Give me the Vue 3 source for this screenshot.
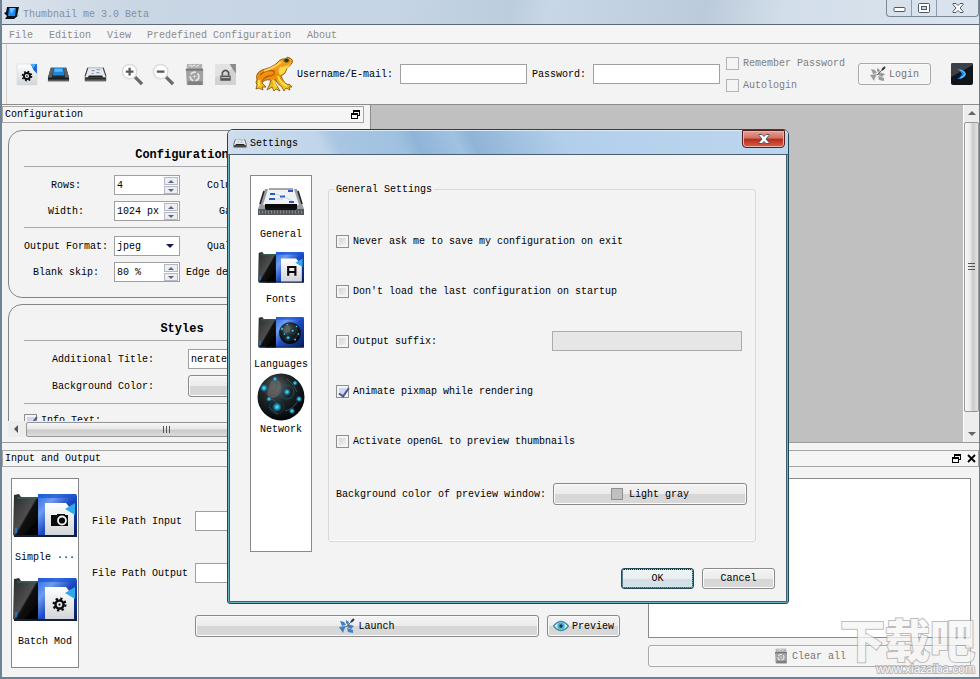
<script setup>
import { ref } from 'vue'

const menus = ['File', 'Edition', 'View', 'Predefined Configuration', 'About']

const toolGroups = [
  [
    { id: 'page-gear', title: 'New configuration' },
    { id: 'tray-blue', title: 'Render' },
  ],
  [{ id: 'tray', title: 'Settings' }],
  [
    { id: 'zoom-in', title: 'Zoom in' },
    { id: 'zoom-out', title: 'Zoom out' },
    { id: 'trash', title: 'Clear' },
    { id: 'page-lock', title: 'Lock' },
  ],
]

const username = ref('')
const password = ref('')

const config = ref({
  rows: '4',
  columns: '4',
  width: '1024 px',
  gap: '4 px',
  format: 'jpeg',
  quality: '80 %',
  blank: '80 %',
  edge: '80 %',
  title: 'nerated by Thumbnail me',
  infoText: true,
})

const modes = [
  { id: 'folder-camera', label: 'Simple ···' },
  { id: 'folder-gear', label: 'Batch Mod' },
]
const inputPath = ref('')
const outputPath = ref('')

// --- SETTINGS DIALOG ---
const sections = [
  { id: 'tray-large', label: 'General' },
  { id: 'folder-font', label: 'Fonts' },
  { id: 'folder-globe', label: 'Languages' },
  { id: 'globe', label: 'Network' },
]
const suffix = ref('')
const options = ref([
  { id: 'ask', label: 'Never ask me to save my configuration on exit', on: false },
  { id: 'load', label: "Don't load the last configuration on startup", on: false },
  { id: 'suffix', label: 'Output suffix:', on: false },
  { id: 'animate', label: 'Animate pixmap while rendering', on: true },
  { id: 'opengl', label: 'Activate openGL to preview thumbnails', on: false },
])
</script>

<template>
  <div class="window">
    <!-- Shared icons -->
    <svg class="defs" aria-hidden="true">
      <defs>
        <linearGradient id="gBlue" x1="0" y1="0" x2="1" y2="1">
          <stop offset="0" stop-color="#2f6ae0" />
          <stop offset="0.25" stop-color="#6f9cf0" />
          <stop offset="0.5" stop-color="#1c4bc4" />
          <stop offset="1" stop-color="#061a55" />
        </linearGradient>
        <linearGradient id="gDark" x1="0" y1="0" x2="1" y2="1">
          <stop offset="0" stop-color="#262a2c" />
          <stop offset="0.5" stop-color="#4e4e4e" />
          <stop offset="0.55" stop-color="#101010" />
          <stop offset="1" stop-color="#000" />
        </linearGradient>
        <linearGradient id="gPage" x1="0" y1="0" x2="0" y2="1">
          <stop offset="0" stop-color="#fff" />
          <stop offset="1" stop-color="#d2d5d8" />
        </linearGradient>
        <linearGradient id="gBar" x1="0" y1="0" x2="0" y2="1">
          <stop offset="0" stop-color="#111" />
          <stop offset="1" stop-color="#777" />
        </linearGradient>
        <linearGradient id="gFrog" x1="0" y1="0" x2="0" y2="1">
          <stop offset="0" stop-color="#f6a81c" />
          <stop offset="0.6" stop-color="#f08c0c" />
          <stop offset="1" stop-color="#f4d832" />
        </linearGradient>
        <radialGradient id="gGlobe" cx="0.4" cy="0.3" r="0.7">
          <stop offset="0" stop-color="#5c6468" />
          <stop offset="0.45" stop-color="#202628" />
          <stop offset="1" stop-color="#020608" />
        </radialGradient>
        <radialGradient id="gGlow">
          <stop offset="0" stop-color="#5fe8ff" />
          <stop offset="0.4" stop-color="#1ea4c8" />
          <stop offset="1" stop-color="#0a4a60" stop-opacity="0" />
        </radialGradient>
      </defs>

      <symbol id="gear" viewBox="0 0 16 16">
        <circle cx="8" cy="8" r="4.3" fill="none" stroke="#0a0a0a" stroke-width="2.6" />
        <circle cx="8" cy="8" r="6.3" fill="none" stroke="#0a0a0a" stroke-width="2.4" stroke-dasharray="2.4 2.55" />
        <circle cx="8" cy="8" r="1.2" fill="#0a0a0a" />
      </symbol>

      <symbol id="logo" viewBox="0 0 16 14">
        <path d="M3 1h12l-2 9 2-1-5 4H1l2-3-3-3 2-1z" fill="#0b1220" />
        <path d="M5 2h7l-1 8H4z" fill="#1f8bf0" />
        <path d="M6 2h5l-4 6z" fill="#7cc6ff" />
      </symbol>

      <symbol id="page-gear" viewBox="0 0 22 22">
        <path d="M1 1h19v20H1z" fill="url(#gPage)" stroke="#d8dadc" stroke-width="0.6" />
        <path d="M14 1h6v9l-3-3z" fill="#1c66d8" />
        <path d="M14 1h5l-2 4z" fill="#4cb4f4" />
        <use href="#gear" x="5" y="7" width="11" height="11" />
      </symbol>

      <symbol id="tray-blue" viewBox="0 0 24 22">
        <path d="M4 4h16l3 10v4H1v-4z" fill="#22272c" />
        <path d="M4 4l-3 10h4l2-10zM20 4l3 10h-4L17 4z" fill="#59626a" />
        <path d="M7 4h10l1 8H6z" fill="#1a86dc" />
        <path d="M8 5h8l.4 3H7.6z" fill="#5cb8f4" />
        <path d="M1 15h22v3H1z" fill="url(#gBar)" />
      </symbol>

      <symbol id="tray" viewBox="0 0 24 22">
        <path d="M4 4h16l3 10v4H1v-4z" fill="#e6e9ec" stroke="#999" stroke-width="0.7" />
        <path d="M4 4l-3 9M20 4l3 9" stroke="#444" stroke-width="1.1" />
        <path d="M8 7h3M13 6h4M8 10h2M13 9h3" stroke="#8693b4" stroke-width="1.2" />
        <path d="M5 12h14l1 2H4z" fill="#222" />
        <path d="M1 14h22v4H1z" fill="url(#gBar)" />
      </symbol>

      <symbol id="tray-large" viewBox="0 0 46 28">
        <path d="M7 1h32l7 20v6H0v-6z" fill="#9a9da0" />
        <path d="M10 1h26l5 16H5z" fill="#eef1f5" />
        <path d="M6 3L2 16M40 3l4 13" stroke="#222" stroke-width="1.6" />
        <path d="M11 1h24" stroke="#555" />
        <path d="M12 6h5M30 3h5M11 11h6M22 8.500h5M31 14h5" stroke="#2c58c0" stroke-width="2" />
        <path d="M17 6l8 2M27 9l7 4M17 11h8" stroke="#b5bfd0" stroke-width="0.6" />
        <path d="M7 16h32v6H7z" fill="#0a0a0a" />
        <path d="M0 21h46v6H0z" fill="#55585b" />
        <path d="M1 24h44" stroke="#888" stroke-width="3" stroke-dasharray="1 2" />
        <path d="M8 20h30v2H8z" fill="#111" />
      </symbol>

      <symbol id="zoom-in" viewBox="0 0 24 24">
        <path d="M14 14l8 8" stroke="#6a6a6a" stroke-width="3.500" />
        <circle cx="9" cy="9" r="7.500" fill="#fdfdfd" stroke="#dcdcdc" stroke-width="1.500" />
        <path d="M9 5v8M5 9h8" stroke="#5a5a5a" stroke-width="2.400" />
      </symbol>

      <symbol id="zoom-out" viewBox="0 0 24 24">
        <path d="M14 14l8 8" stroke="#6a6a6a" stroke-width="3.500" />
        <circle cx="9" cy="9" r="7.500" fill="#fdfdfd" stroke="#dcdcdc" stroke-width="1.500" />
        <path d="M5 9h8" stroke="#5a5a5a" stroke-width="2.400" />
      </symbol>

      <symbol id="trash" viewBox="0 0 22 24">
        <path d="M3 1h16v6H3z" fill="#b2b2b2" />
        <path d="M5 3l2-1 1 2 3-2 2 2 3-2" stroke="#eee" fill="none" />
        <path d="M2 6h18v17H3z" fill="#a2a2a2" />
        <path d="M2 6h18v2H2z" fill="#777" />
        <path d="M4 19h15v4H4z" fill="#808080" />
        <circle cx="11" cy="14" r="4.500" fill="none" stroke="#e6e6e6" stroke-width="1.800" stroke-dasharray="6 2" />
        <path d="M9 14h4M11 12v4" stroke="#d5d5d5" />
      </symbol>

      <symbol id="page-lock" viewBox="0 0 22 22">
        <path d="M1 1h20v20H1z" fill="#e2e2e2" />
        <path d="M1 14L21 4v17H1z" fill="#d2d2d2" />
        <path d="M15 1h6v9l-3-4z" fill="#8c8c8c" />
        <path d="M8 12V9q3-4 6 0v3" fill="none" stroke="#555" stroke-width="1.600" />
        <path d="M6 12h10v5H6z" fill="#555" />
        <path d="M7 14h8" stroke="#ccc" />
      </symbol>

      <symbol id="frog" viewBox="0 0 40 36">
        <path d="M3 24Q1 17 8 14Q17 12 22 8Q27 2 31 3Q33 0 36 2Q40 4 38 7Q36 10 33 12Q32 18 27 20Q29 25 32 28Q37 28 38 31L35 31L36 34L32 32L30 35L28 31Q23 28 21 23Q20 27 23 30L26 35L22 33L20 35L18 31L13 34L15 30L17 24Q10 23 8 27L12 31L8 31L9 34L5 32L2 33L3 29Q1 26 3 24z" fill="url(#gFrog)" stroke="#92550a" stroke-width="0.9" />
        <path d="M6 19Q12 13 20 15Q22 19 15 20Q10 21 8 26" fill="none" stroke="#b85f05" stroke-width="1.300" />
        <path d="M10 15Q20 12 27 6" stroke="#ffd35c" stroke-width="1.800" fill="none" />
        <path d="M26 11Q33 11 37 7Q34 12 32 13Q31 18 26 19Q23 15 26 11z" fill="#f6dc4a" />
        <path d="M24 20Q26 27 33 30M19 24L22 31M5 24v6" stroke="#f8ea48" stroke-width="1.900" fill="none" />
        <ellipse cx="32.500" cy="4.500" rx="2.600" ry="1.900" fill="#2d3016" stroke="#7a7a1c" />
      </symbol>

      <symbol id="arrow-box" viewBox="0 0 22 22">
        <rect width="22" height="22" rx="2" fill="#111418" />
        <path d="M0 2q0-2 2-2h18q2 0 2 2L0 14z" fill="#3c4148" />
        <path d="M6 6q8 0 9 5q-1 5-9 5q4-2 5-5q-1-3-5-5z" fill="#1785ee" />
        <path d="M9 7q4 1 5 4q-1 3-5 4" fill="none" stroke="#63c0ff" stroke-width="1.200" />
      </symbol>

      <symbol id="launch" viewBox="0 0 16 16">
        <path d="M1 3l4 1 2 3-4 1zM0 9l7-1-2 4-1 3-2-3zM9 6l6 2-3 3-4-2zM8 10l6 2v3l-5-1zM7 2l3 2-1 3-2-2z" fill="currentColor" />
        <path d="M7 9l6-6" stroke="#667" stroke-width="1" />
        <path d="M12 4l3-3" stroke="#333" stroke-width="2" />
      </symbol>

      <symbol id="eye" viewBox="0 0 16 12">
        <path d="M0.500 6Q8-3 15.500 6Q8 15 0.500 6z" fill="#dff2f8" stroke="#3f8ca4" stroke-width="1.400" />
        <circle cx="8" cy="6" r="3.800" fill="#4db2d2" />
        <circle cx="8" cy="6" r="1.700" fill="#103848" />
      </symbol>

      <symbol id="folder" viewBox="0 0 64 44">
        <path d="M1 2l5-1 2 3h17v40H3l-3-2z" fill="url(#gDark)" />
        <path d="M4 5h21" stroke="#37695f" stroke-width="1.200" />
        <path d="M10 44l15-17v17z" fill="#000" />
        <path d="M25 1h38l1 2v41H25z" fill="url(#gBlue)" />
        <path d="M25 1h38v4H25z" fill="#1a56d4" opacity="0.7" />
        <path d="M3 35v5" stroke="#2b7ad8" stroke-width="1.600" />
        <path d="M1 42h62v2H1z" fill="#14203a" />
      </symbol>

      <symbol id="folder-page" viewBox="0 0 64 44">
        <use href="#folder" width="64" height="44" />
        <path d="M32 10h21l8 10v22H32z" fill="url(#gPage)" />
        <path d="M52 16l10-6v12z" fill="#2fa8ee" />
      </symbol>

      <symbol id="folder-camera" viewBox="0 0 64 44">
        <use href="#folder-page" width="64" height="44" />
        <path d="M38 22h6v-1h8v1h3v11H38z" fill="#0a0a0a" />
        <circle cx="49" cy="27.500" r="4" fill="#0a0a0a" stroke="#f4f4f4" stroke-width="1.800" />
      </symbol>

      <symbol id="folder-gear" viewBox="0 0 64 44">
        <use href="#folder-page" width="64" height="44" />
        <use href="#gear" x="39" y="20" width="15" height="15" />
      </symbol>

      <symbol id="folder-font" viewBox="0 0 64 44">
        <use href="#folder-page" width="64" height="44" />
        <path d="M42 34V22h10v12M42 29h10" fill="none" stroke="#0a0a0a" stroke-width="3" />
      </symbol>

      <symbol id="globe" viewBox="0 0 48 48">
        <circle cx="24" cy="24" r="23.500" fill="url(#gGlobe)" />
        <path d="M14 8q8-4 10 4t-5 12-9-4z" fill="#6e6a68" opacity="0.6" />
        <path d="M17 5q6 8-1 14M9 27q8-3 12 5M30 6q8 6 10 13M28 38q8-2 12-9M12 34q5 5 9 7" fill="none" stroke="#4b585c" stroke-width="0.8" />
        <circle cx="30" cy="19" r="7" fill="none" stroke="#1c6478" stroke-width="0.7" />
        <circle cx="20" cy="34" r="7" fill="none" stroke="#14485a" stroke-width="0.7" />
        <circle cx="7" cy="15" r="4.500" fill="url(#gGlow)" />
        <circle cx="20" cy="34" r="5.500" fill="url(#gGlow)" />
        <circle cx="30" cy="19" r="4" fill="url(#gGlow)" />
        <circle cx="38" cy="10" r="3" fill="url(#gGlow)" />
        <circle cx="42" cy="26" r="3.500" fill="url(#gGlow)" />
        <circle cx="35" cy="38" r="3.500" fill="url(#gGlow)" />
        <circle cx="12" cy="26" r="3" fill="url(#gGlow)" />
        <circle cx="18" cy="6" r="3" fill="url(#gGlow)" />
      </symbol>

      <symbol id="folder-globe" viewBox="0 0 64 44">
        <use href="#folder" width="64" height="44" />
        <use href="#globe" x="29" y="8" width="31" height="31" />
      </symbol>

      <symbol id="float" viewBox="0 0 9 9">
        <path d="M2.500 0v3M8.500 0v6M2 .5h7M6 5.500h3M2 1.500h7M.5 3v6M6.500 3v6M0 3.500h7M0 4.500h7M0 8.500h7" stroke="#000" fill="none" />
      </symbol>
      <symbol id="cross" viewBox="0 0 9 9">
        <path d="M1 1l7 7M8 1l-7 7" stroke="#000" stroke-width="1.800" />
      </symbol>
      <symbol id="close" viewBox="0 0 12 10">
        <path d="M1 .5h3l2 2 2-2h3v1L8 5l3 3.500v1H8l-2-2-2 2H1v-1L4 5 1 1.500z" fill="#fff" stroke="#4d5966" />
      </symbol>
    </svg>

    <header class="titlebar">
      <svg class="logo"><use href="#logo" /></svg>
      <span class="caption">Thumbnail me 3.0 Beta</span>
      <div class="window-buttons">
        <button type="button" aria-label="Minimize">
          <svg width="13" height="10"><rect x="1" y="4.500" width="11" height="4" rx="1" fill="#fff" stroke="#4d5966" /></svg>
        </button>
        <button type="button" aria-label="Maximize">
          <svg width="12" height="10">
            <rect x=".5" y=".5" width="11" height="9" rx="1" fill="#fff" stroke="#4d5966" />
            <rect x="3.500" y="3.500" width="5" height="3" fill="#c8d4e0" stroke="#4d5966" />
          </svg>
        </button>
        <button type="button" class="wide" aria-label="Close">
          <svg width="12" height="10"><use href="#close" /></svg>
        </button>
      </div>
    </header>

    <nav class="menubar">
      <a v-for="menu in menus" :key="menu" href="#">{{ menu }}</a>
    </nav>

    <div class="toolbar">
      <div v-for="(group, i) in toolGroups" :key="i" class="tools">
        <button v-for="tool in group" :key="tool.id" type="button" class="tool" :aria-label="tool.title">
          <svg><use :href="'#' + tool.id" /></svg>
        </button>
      </div>
      <svg class="frog"><use href="#frog" /></svg>
      <label for="username">Username/E-mail:</label>
      <input id="username" v-model="username" type="text" class="field login-field" />
      <label for="password">Password:</label>
      <input id="password" v-model="password" type="password" class="field login-field" />
      <div class="remember">
        <label class="check"><input type="checkbox" disabled />Remember Password</label>
        <label class="check"><input type="checkbox" disabled />Autologin</label>
      </div>
      <button type="button" class="btn login" disabled>
        <svg class="icon"><use href="#launch" /></svg>Login
      </button>
      <button type="button" class="go" aria-label="Go">
        <svg><use href="#arrow-box" /></svg>
      </button>
    </div>

    <div class="workspace">
      <aside class="dock">
        <div class="dock-title">
          <span>Configuration</span>
          <button type="button" aria-label="Float configuration"><svg><use href="#float" /></svg></button>
        </div>
        <div class="dock-scroll">
          <section class="box">
            <h2>Configuration</h2>
            <div class="grid">
              <label for="rows">Rows:</label>
              <span class="spin"><input id="rows" v-model="config.rows" type="text" /><button type="button" aria-label="More rows"></button><button type="button" aria-label="Fewer rows"></button></span>
              <label for="columns">Columns:</label>
              <span class="spin"><input id="columns" v-model="config.columns" type="text" /><button type="button" aria-label="More columns"></button><button type="button" aria-label="Fewer columns"></button></span>
              <label for="width">Width:</label>
              <span class="spin"><input id="width" v-model="config.width" type="text" /><button type="button" aria-label="Wider"></button><button type="button" aria-label="Narrower"></button></span>
              <label for="gap">Gap:</label>
              <span class="spin"><input id="gap" v-model="config.gap" type="text" /><button type="button" aria-label="More gap"></button><button type="button" aria-label="Less gap"></button></span>
            </div>
            <div class="grid">
              <label for="format">Output Format:</label>
              <span class="drop"><select id="format" v-model="config.format"><option>jpeg</option><option>png</option></select></span>
              <label for="quality">Quality:</label>
              <span class="spin"><input id="quality" v-model="config.quality" type="text" /><button type="button" aria-label="More quality"></button><button type="button" aria-label="Less quality"></button></span>
              <label for="blank">Blank skip:</label>
              <span class="spin"><input id="blank" v-model="config.blank" type="text" /><button type="button" aria-label="More skip"></button><button type="button" aria-label="Less skip"></button></span>
              <label for="edge">Edge detection:</label>
              <span class="spin"><input id="edge" v-model="config.edge" type="text" /><button type="button" aria-label="More edge"></button><button type="button" aria-label="Less edge"></button></span>
            </div>
          </section>

          <section class="box">
            <h2>Styles</h2>
            <div class="grid styles-grid">
              <label for="title">Additional Title:</label>
              <input id="title" v-model="config.title" type="text" class="field" />
              <label for="bgcolor">Background Color:</label>
              <button id="bgcolor" type="button" class="btn"></button>
            </div>
            <div class="grid info-grid">
              <label class="check"><input v-model="config.infoText" type="checkbox" />Info Text:</label>
            </div>
          </section>
        </div>
        <div class="hscroll">
          <i class="arrow left"></i>
          <div class="thumb"><i></i><i></i><i></i></div>
          <i class="arrow right"></i>
        </div>
      </aside>
      <main class="canvas"></main>
      <div class="vscroll">
        <i class="arrow up"></i>
        <div class="thumb"><i></i><i></i><i></i></div>
        <i class="arrow down"></i>
      </div>
    </div>

    <div class="dock-title io-title">
      <span>Input and Output</span>
      <button type="button" aria-label="Float input and output"><svg><use href="#float" /></svg></button>
      <button type="button" aria-label="Close input and output"><svg><use href="#cross" /></svg></button>
    </div>

    <div class="io">
      <ul class="modes">
        <li v-for="mode in modes" :key="mode.id">
          <svg><use :href="'#' + mode.id" /></svg>
          <span>{{ mode.label }}</span>
        </li>
      </ul>
      <div class="paths">
        <label for="in-path">File Path Input</label>
        <input id="in-path" v-model="inputPath" type="text" class="field" />
        <label for="out-path">File Path Output</label>
        <input id="out-path" v-model="outputPath" type="text" class="field" />
        <div class="run">
          <button type="button" class="btn launch"><svg class="icon"><use href="#launch" /></svg>Launch</button>
          <button type="button" class="btn preview"><svg class="icon"><use href="#eye" /></svg>Preview</button>
        </div>
      </div>
      <div class="jobs">
        <div class="job-list"></div>
        <button type="button" class="btn" disabled><svg class="icon"><use href="#trash" /></svg>Clear all</button>
      </div>
    </div>

    <div class="dialog" role="dialog" aria-labelledby="dialog-title">
      <div class="dialog-title">
        <svg><use href="#tray" /></svg>
        <span id="dialog-title">Settings</span>
        <button type="button" aria-label="Close settings"><svg><use href="#close" /></svg></button>
      </div>
      <div class="dialog-body">
        <ul class="sections">
          <li v-for="section in sections" :key="section.id">
            <svg :class="section.id"><use :href="'#' + section.id" /></svg>
            <span>{{ section.label }}</span>
          </li>
        </ul>
        <fieldset class="settings">
          <legend>General Settings</legend>
          <div v-for="option in options" :key="option.id" class="option">
            <label class="check"><input v-model="option.on" type="checkbox" />{{ option.label }}</label>
            <input
              v-if="option.id === 'suffix'"
              v-model="suffix"
              type="text"
              class="field suffix"
              aria-label="Output suffix"
              :disabled="!option.on"
            />
          </div>
          <div class="option color-option">
            <label for="preview-color">Background color of preview window:</label>
            <button id="preview-color" type="button" class="btn"><i class="swatch"></i>Light gray</button>
          </div>
        </fieldset>
      </div>
      <div class="dialog-footer">
        <button type="button" class="btn default">OK</button>
        <button type="button" class="btn">Cancel</button>
      </div>
    </div>

    <div class="watermark">
      <strong>下载吧</strong>
      <span>www.xiazaiba.com</span>
    </div>
  </div>
</template>

<style>
body {
  margin: 0;
  background: #f3f3f3;
}
</style>

<style scoped>
.window,
.window * {
  box-sizing: border-box;
}

.window {
  position: relative;
  display: flex;
  flex-direction: column;
  height: 100vh;
  min-height: 640px;
  overflow: hidden;
  background: #f3f3f3;
  border-left: 2px solid #6c8494;
  border-right: 1px solid #6c7f8e;
  border-bottom: 2px solid #6b8296;
  color: #000;
  font: 10px/13px 'Liberation Mono', 'Noto Sans CJK SC', monospace;
}

button,
input,
select {
  margin: 0;
  padding: 0;
  color: inherit;
  font: inherit;
}

button {
  border: 0;
  background: none;
}

svg {
  display: block;
  flex: none;
}

.defs {
  position: absolute;
  width: 0;
  height: 0;
}

/* --- TITLE BAR --- */
.titlebar {
  display: flex;
  align-items: flex-start;
  gap: 3px;
  height: 25px;
  margin-left: -2px;
  padding-left: 4px;
  border-bottom: 1px solid #5f6973;
  background: linear-gradient(100deg, #dbe2eb 0, #c9d6e4 14%, #c5d5e6 40%, #bccddd 52%, #c8d7e7 56%, #bccbdb 72%, #d2deea 80%, #dbe4ee 100%);
}

.logo {
  width: 16px;
  height: 14px;
  margin-top: 6px;
}

.caption {
  flex: 1;
  margin-top: 8px;
  color: #87909a;
}

.window-buttons {
  display: flex;
  height: 17px;
  border: 1px solid #7a8794;
  border-top: 0;
  border-radius: 0 0 4px 4px;
}

.window-buttons button {
  display: flex;
  align-items: center;
  justify-content: center;
  width: 25px;
  border-right: 1px solid #8f9ca9;
}

.window-buttons .wide {
  width: 41px;
  border-right: 0;
}

/* --- MENU AND TOOLBAR --- */
.menubar {
  display: flex;
  gap: 16px;
  height: 19px;
  padding: 4px 7px 0;
  border-bottom: 1px solid #a4a4a4;
  background: #f5f5f5;
}

.menubar a {
  color: #8b8b8b;
  text-decoration: none;
}

.toolbar {
  display: flex;
  align-items: center;
  height: 60px;
  margin-left: 4px;
  padding: 0 6px 0 5px;
  border-left: 1px solid #d0d0d0;
}

.tools {
  display: flex;
  margin-right: 6px;
}

.tool {
  display: flex;
  align-items: center;
  justify-content: center;
  width: 31px;
  height: 30px;
}

.tool svg {
  width: 23px;
  height: 23px;
}

.frog {
  width: 40px;
  height: 36px;
  margin: 0 3px 0 7px;
}

.field {
  width: 100%;
  height: 20px;
  padding: 0 2px;
  border: 1px solid #a0a0a0;
  border-radius: 0;
  background: #fff;
  outline: 0;
}

.login-field {
  flex: 1;
  min-width: 0;
  margin: 0 5px 0 7px;
}

.remember {
  display: flex;
  flex-direction: column;
  gap: 9px;
  margin: 0 13px 0 1px;
  color: #808080;
}

.check {
  display: flex;
  align-items: center;
  gap: 4px;
  white-space: nowrap;
}

.check input {
  position: relative;
  flex: none;
  width: 13px;
  height: 13px;
  border: 1px solid #8e8f8f;
  background: linear-gradient(135deg, #cfcfcf, #f8f8f8);
  box-shadow: inset 0 0 0 2px #f4f4f4;
  appearance: none;
}

.check input:disabled {
  border-color: #b4b4b4;
  background: #f4f4f4;
}

.check input:checked {
  background: #cfd8ee;
}

.check input:checked::after {
  content: '';
  position: absolute;
  top: 0;
  left: 4px;
  width: 4px;
  height: 9px;
  border: solid #4a5a94;
  border-width: 0 2px 2px 0;
  transform: rotate(35deg);
}

.btn {
  display: flex;
  align-items: center;
  justify-content: center;
  gap: 3px;
  height: 22px;
  border: 1px solid #8a8a8a;
  border-radius: 3px;
  background: linear-gradient(#f4f4f4, #ebebeb 50%, #d6d6d6 52%, #d9d9d9);
  box-shadow: inset 0 0 0 1px #fafafa;
}

.btn:disabled {
  border-color: #a8a8a8;
  background: #f4f4f4;
  color: #757575;
}

.icon {
  width: 16px;
  height: 16px;
}

.login {
  width: 73px;
}

.login .icon {
  color: #9b9b9b;
}

.go {
  margin-left: 20px;
}

.go svg {
  width: 22px;
  height: 22px;
}

/* --- WORKSPACE --- */
.workspace {
  display: flex;
  flex: 1;
  min-height: 0;
  border-top: 1px solid #8c8c8c;
  border-bottom: 1px solid #9a9a9a;
}

.dock {
  display: flex;
  flex-direction: column;
  width: 369px;
  padding: 1px 6px 5px 0;
  border-right: 1px solid #8c8c8c;
}

.dock-title {
  display: flex;
  align-items: center;
  flex: none;
  gap: 6px;
  height: 17px;
  padding: 0 3px 0 2px;
  border: 1px solid #a6a6a6;
  background: #f5f5f5;
}

.dock-title span {
  flex: 1;
}

.dock-title svg {
  width: 9px;
  height: 9px;
}

.dock-scroll {
  flex: 1;
  min-height: 0;
  margin-left: 6px;
  padding-top: 7px;
  overflow: hidden;
}

.box {
  width: 348px;
  margin-bottom: 6px;
  padding: 18px 15px 15px;
  border: 1px solid #858585;
  border-radius: 14px;
}

.box h2 {
  margin: 0 0 5px;
  font-size: 12px;
  font-weight: bold;
  line-height: 12px;
  text-align: center;
}

.grid {
  display: grid;
  grid-template-columns: 84px 66px 90px 1fr;
  align-items: center;
  gap: 6px;
  padding: 8px 0 6px;
  border-top: 1px solid #a8a8a8;
  text-align: center;
}

.grid + .grid {
  padding-bottom: 0;
}

.styles-grid {
  grid-template-columns: 158px 1fr;
}

.info-grid {
  grid-template-columns: 1fr;
  padding-top: 10px;
}

.spin,
.drop {
  display: grid;
  grid-template: 8px 8px / 1fr 14px;
  gap: 1px;
  height: 20px;
  padding: 1px 1px 0 2px;
  border: 1px solid #a0a0a0;
  background: #fff;
}

.spin input {
  grid-row: span 2;
  width: 100%;
  min-width: 0;
  border: 0;
  background: none;
  outline: 0;
}

.spin button {
  display: flex;
  align-items: center;
  justify-content: center;
  border: 1px solid #b4b8c2;
  background: #eceef3;
}

.spin button::after {
  content: '';
  border: solid transparent;
  border-width: 0 3px 3px;
  border-bottom-color: #5c6480;
}

.spin button:last-child::after {
  border-width: 3px 3px 0;
  border-top-color: #5c6480;
}

.drop {
  position: relative;
  display: block;
}

.drop select {
  width: 100%;
  height: 16px;
  border: 0;
  background: none;
  appearance: none;
}

.drop::after {
  content: '';
  position: absolute;
  top: 7px;
  right: 5px;
  border: solid transparent;
  border-width: 4px 4px 0;
  border-top-color: #15195c;
}

/* Scroll bars */
.hscroll,
.vscroll {
  display: flex;
  align-items: center;
  background: #ededed;
}

.hscroll {
  height: 16px;
  margin-left: 6px;
}

.vscroll {
  flex-direction: column;
  width: 16px;
  border-left: 1px solid #fff;
}

.thumb {
  display: flex;
  align-items: center;
  justify-content: center;
  gap: 1px;
  border: 1px solid #969696;
  border-radius: 2px;
}

.thumb i {
  width: 2px;
  height: 7px;
  border-left: 1px solid #555;
}

.hscroll .thumb {
  flex: none;
  width: 282px;
  height: 15px;
  margin-right: auto;
  background: linear-gradient(#f6f6f6, #e8e8e8 45%, #cacaca 55%, #dcdcdc);
}

.vscroll .thumb {
  flex: 1;
  flex-direction: column;
  width: 15px;
  background: linear-gradient(90deg, #f8f8f8, #ebebeb 40%, #c8cacd 60%, #e4e4e4);
}

.vscroll .thumb i {
  width: 7px;
  height: 2px;
  border-top: 1px solid #555;
  border-left: 0;
}

.arrow {
  border: 4px solid transparent;
}

.arrow.left {
  margin: 0 8px 0 2px;
  border-right-color: #555;
}

.arrow.right {
  border-left-color: #555;
}

.arrow.up {
  margin: 2px 0 7px;
  border-bottom-color: #666;
}

.arrow.down {
  margin: 20px 0 2px;
  border-top-color: #666;
}

.canvas {
  flex: 1;
  background: #c0c0c0;
}

/* --- INPUT AND OUTPUT --- */
.io-title {
  margin-top: 7px;
  padding-right: 2px;
}

.io {
  display: flex;
  flex: none;
  padding: 11px 8px 9px 9px;
}

ul {
  margin: 0;
  padding: 0;
  list-style: none;
}

.modes {
  flex: none;
  width: 68px;
  padding: 14px 1px 6px;
  border: 1px solid #868686;
  background: #fff;
}

.modes li {
  display: flex;
  flex-direction: column;
  align-items: center;
  gap: 14px;
  padding-bottom: 13px;
}

.modes svg {
  width: 64px;
  height: 44px;
}

.paths {
  display: grid;
  flex: 528;
  grid-template-columns: 96px 1fr;
  align-content: start;
  align-items: center;
  gap: 32px 7px;
  margin: 33px 28px 0 13px;
}

.run {
  display: flex;
  grid-column: 2;
  gap: 8px;
}

.launch {
  flex: 1;
}

.launch .icon {
  color: #3f7fc4;
}

.preview {
  width: 73px;
}

.jobs {
  display: flex;
  flex: 323;
  flex-direction: column;
  gap: 7px;
}

.job-list {
  height: 160px;
  border: 1px solid #8a8a8a;
  background: #fff;
}

/* --- SETTINGS DIALOG --- */
.dialog {
  position: absolute;
  top: 129px;
  left: 225px;
  width: 562px;
  border: 1px solid #1c4654;
  border-radius: 6px 6px 3px 3px;
  background: #f3f3f3;
  box-shadow: inset 0 0 0 1px #6ab3c0, inset 0 0 0 2px #41606c;
}

.dialog-title {
  display: flex;
  align-items: center;
  gap: 3px;
  height: 25px;
  padding: 2px 3px 0 5px;
  border-bottom: 1px solid #4a5f70;
  border-radius: 5px 5px 0 0;
  background: linear-gradient(65deg, #cfdeee 0, #c0d5ea 17%, #a9c6e2 20%, #9fc1e0 31%, #8fb4d7 34%, #a0c2e1 41%, #90b4d6 44%, #b2cfea 60%, #bdd6ee 100%);
  box-shadow: inset 0 1px 0 #dcebf8;
}

.dialog-title svg {
  width: 14px;
  height: 13px;
}

.dialog-title span {
  flex: 1;
}

.dialog-title button {
  display: flex;
  align-items: center;
  justify-content: center;
  align-self: flex-start;
  width: 43px;
  height: 18px;
  margin-top: -2px;
  border: 1px solid #5a1f1c;
  border-radius: 0 0 4px 4px;
  background: linear-gradient(#e3a599, #d26f5e 45%, #b8291b 50%, #d7604b);
  box-shadow: inset 0 0 0 1px #eab5a8;
}

.dialog-title button svg {
  width: 12px;
  height: 10px;
}

.dialog-body {
  display: flex;
  align-items: flex-start;
  gap: 16px;
  padding: 20px 32px 0 22px;
}

.sections {
  flex: none;
  width: 62px;
  height: 377px;
  padding-top: 2px;
  border: 1px solid #8a8a8a;
  background: #fff;
}

.sections li {
  display: grid;
  grid-template-rows: 48px 17px;
  align-items: center;
  justify-items: center;
}

.sections svg {
  width: 46px;
  height: 32px;
}

.sections .globe {
  width: 48px;
  height: 48px;
}

.settings {
  flex: 1;
  min-width: 0;
  height: 359px;
  margin: 8px 0 0;
  padding: 20px 8px 0 7px;
  border: 1px solid #d9d9d9;
  border-radius: 3px;
  box-shadow: inset 0 -1px 0 #fff;
}

.settings legend {
  margin-left: -2px;
  padding: 0 2px;
}

.option {
  display: flex;
  align-items: center;
  justify-content: space-between;
  height: 50px;
}

.suffix {
  width: 190px;
  margin-right: 5px;
}

.suffix:disabled {
  border-color: #ababab;
  background: #e6e6e6;
}

.color-option {
  height: 56px;
}

.color-option .btn {
  gap: 6px;
  width: 194px;
}

.swatch {
  width: 12px;
  height: 12px;
  border: 1px solid #909090;
  background: #c0c0c0;
}

.dialog-footer {
  display: flex;
  justify-content: flex-end;
  gap: 8px;
  padding: 16px 13px 14px;
}

.dialog-footer .btn {
  width: 73px;
  height: 21px;
}

.dialog-footer .default {
  border-color: #244a58;
  background: linear-gradient(#f0f4f4, #e8eef0 50%, #d4dee2 52%, #d2e4ea);
  box-shadow: inset 0 0 0 1px #8fdce8;
  outline: 1px dotted #223;
  outline-offset: -2px;
}

/* Site mark over the lower right corner */
.watermark {
  position: absolute;
  right: 4px;
  bottom: 2px;
  display: flex;
  flex-direction: column;
  align-items: flex-end;
  color: #f6f6f6;
  opacity: 0.75;
  pointer-events: none;
  paint-order: stroke fill;
  -webkit-text-stroke: 2px #a8a8a8;
}

.watermark strong {
  font: 900 45px/48px 'Noto Sans CJK SC', sans-serif;
}

.watermark span {
  font: 12px/12px 'Liberation Sans', sans-serif;
}
</style>
